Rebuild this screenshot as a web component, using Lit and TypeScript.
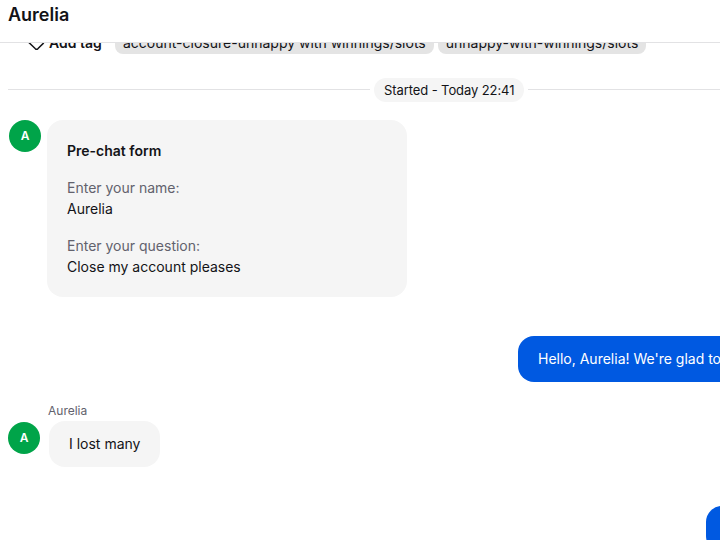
import { css, html, LitElement } from 'lit'
import { customElement, property } from 'lit/decorators.js'

interface FormField {
  label: string
  value: string
}

@customElement('user-avatar')
export class UserAvatar extends LitElement {
  static styles = css`
    :host {
      display: flex;
      flex: none;
      align-items: center;
      justify-content: center;
      width: 32px;
      height: 32px;
      border-radius: 50%;
      background: #00a449;
      color: #fff;
      font-size: 12px;
      font-weight: 600;
      line-height: 1;
    }
  `

  @property()
  name = ''

  render() {
    return html`${this.name.charAt(0)}`
  }
}

@customElement('chat-bubble')
export class ChatBubble extends LitElement {
  static styles = css`
    :host {
      display: block;
      flex: none;
      box-sizing: border-box;
      min-height: 46px;
      padding: 12px 20px;
      border-radius: 16px;
      background: #f5f5f5;
      color: #131317;
      font-size: 14px;
      line-height: 22px;
      white-space: nowrap;
    }

    :host([own]) {
      background: #0059e1;
      color: #fff;
    }
  `

  @property({ type: Boolean, reflect: true })
  own = false

  render() {
    return html`<slot></slot>`
  }
}

@customElement('prechat-form')
export class PrechatForm extends LitElement {
  static styles = css`
    :host {
      display: flex;
      flex-direction: column;
      gap: 16px;
      box-sizing: border-box;
      width: 360px;
      padding: 20px;
      border-radius: 16px;
      background: #f5f5f5;
      color: #131317;
      font-size: 14px;
      line-height: 21px;
    }

    .title {
      font-weight: 600;
    }

    .label {
      color: #62626d;
    }
  `

  @property({ attribute: false })
  fields: FormField[] = []

  render() {
    return html`
      <div class="title">Pre-chat form</div>
      ${this.fields.map(
        (field) => html`
          <div class="field">
            <div class="label">${field.label}</div>
            <div class="value">${field.value}</div>
          </div>
        `,
      )}
    `
  }
}

@customElement('app-root')
export class AppRoot extends LitElement {
  static styles = css`
    :host {
      display: flex;
      flex-direction: column;
      height: 100vh;
      overflow: hidden;
      background: #fff;
      color: #131317;
      font-family: Inter, 'Liberation Sans', sans-serif;
      font-size: 14px;
    }

    .header {
      flex: none;
      box-sizing: border-box;
      height: 43px;
      padding: 2px 8px 0;
      border-bottom: 1px solid #e2e2e4;
      font-size: 18px;
      font-weight: 600;
      line-height: 26px;
    }

    .feed {
      flex: 1;
      min-height: 0;
      overflow: hidden;
    }

    /* the feed is scrolled so that the tag row is half under the header */
    .tags {
      display: flex;
      align-items: center;
      gap: 4px;
      height: 22px;
      margin-top: -11px;
      padding-left: 28px;
    }

    .add-tag {
      display: flex;
      align-items: center;
      gap: 4px;
      width: 83px;
      font-weight: 600;
      line-height: 22px;
    }

    .add-tag svg {
      width: 17px;
      height: 18px;
    }

    .tag {
      padding: 0 8px;
      border-radius: 8px;
      background: #e4e4e4;
      line-height: 22px;
      white-space: nowrap;
    }

    .divider {
      display: flex;
      align-items: center;
      gap: 4px;
      height: 24px;
      margin-top: 24px;
      padding-left: 8px;
    }

    .line {
      flex: none;
      width: 362px;
      height: 1px;
      margin-top: -1px;
      background: #e2e2e4;
    }

    .line.end {
      flex: 1;
    }

    .started {
      flex: none;
      box-sizing: border-box;
      width: 150px;
      padding: 0 10px;
      border-radius: 12px;
      background: #f5f5f5;
      font-size: 13px;
      letter-spacing: -0.09px;
      line-height: 24px;
      white-space: nowrap;
    }

    .form-row {
      display: flex;
      gap: 6px;
      margin-top: 18px;
      padding-left: 9px;
    }

    .own-row {
      display: flex;
      margin-top: 39px;
      padding-left: 518px;
    }

    .own-row.last {
      padding-left: 706px;
    }

    .author {
      margin-top: 20px;
      padding-left: 48px;
      color: #62626d;
      font-size: 12px;
      line-height: 18px;
    }

    .message-row {
      display: flex;
      align-items: center;
      gap: 9px;
      margin-top: 1px;
      padding-left: 8px;
    }

    .message-row user-avatar {
      margin-bottom: 12px;
    }
  `

  private tags = [
    'account-closure-unhappy with winnings/slots',
    'unhappy-with-winnings/slots',
  ]

  private fields: FormField[] = [
    { label: 'Enter your name:', value: 'Aurelia' },
    { label: 'Enter your question:', value: 'Close my account pleases' },
  ]

  render() {
    return html`
      <div class="header">Aurelia</div>
      <div class="feed">
        <div class="tags">
          <div class="add-tag">
            <svg viewBox="0 0 17 18" fill="none" stroke="#131317">
              <path
                d="M2 1.5h6l7.2 6.3q.6.8 0 1.6l-5.4 5.4q-1.2 1-2.4 0L1 8.6z"
                stroke-width="1.5"
              />
            </svg>
            Add tag
          </div>
          ${this.tags.map((tag) => html`<div class="tag">${tag}</div>`)}
        </div>
        <div class="divider">
          <div class="line"></div>
          <div class="started">Started - Today 22:41</div>
          <div class="line end"></div>
        </div>
        <div class="form-row">
          <user-avatar name="Aurelia"></user-avatar>
          <prechat-form .fields=${this.fields}></prechat-form>
        </div>
        <div class="own-row">
          <chat-bubble own>Hello, Aurelia! We're glad to</chat-bubble>
        </div>
        <div class="author">Aurelia</div>
        <div class="message-row">
          <user-avatar name="Aurelia"></user-avatar>
          <chat-bubble>I lost many</chat-bubble>
        </div>
        <div class="own-row last">
          <chat-bubble own></chat-bubble>
        </div>
      </div>
    `
  }
}
